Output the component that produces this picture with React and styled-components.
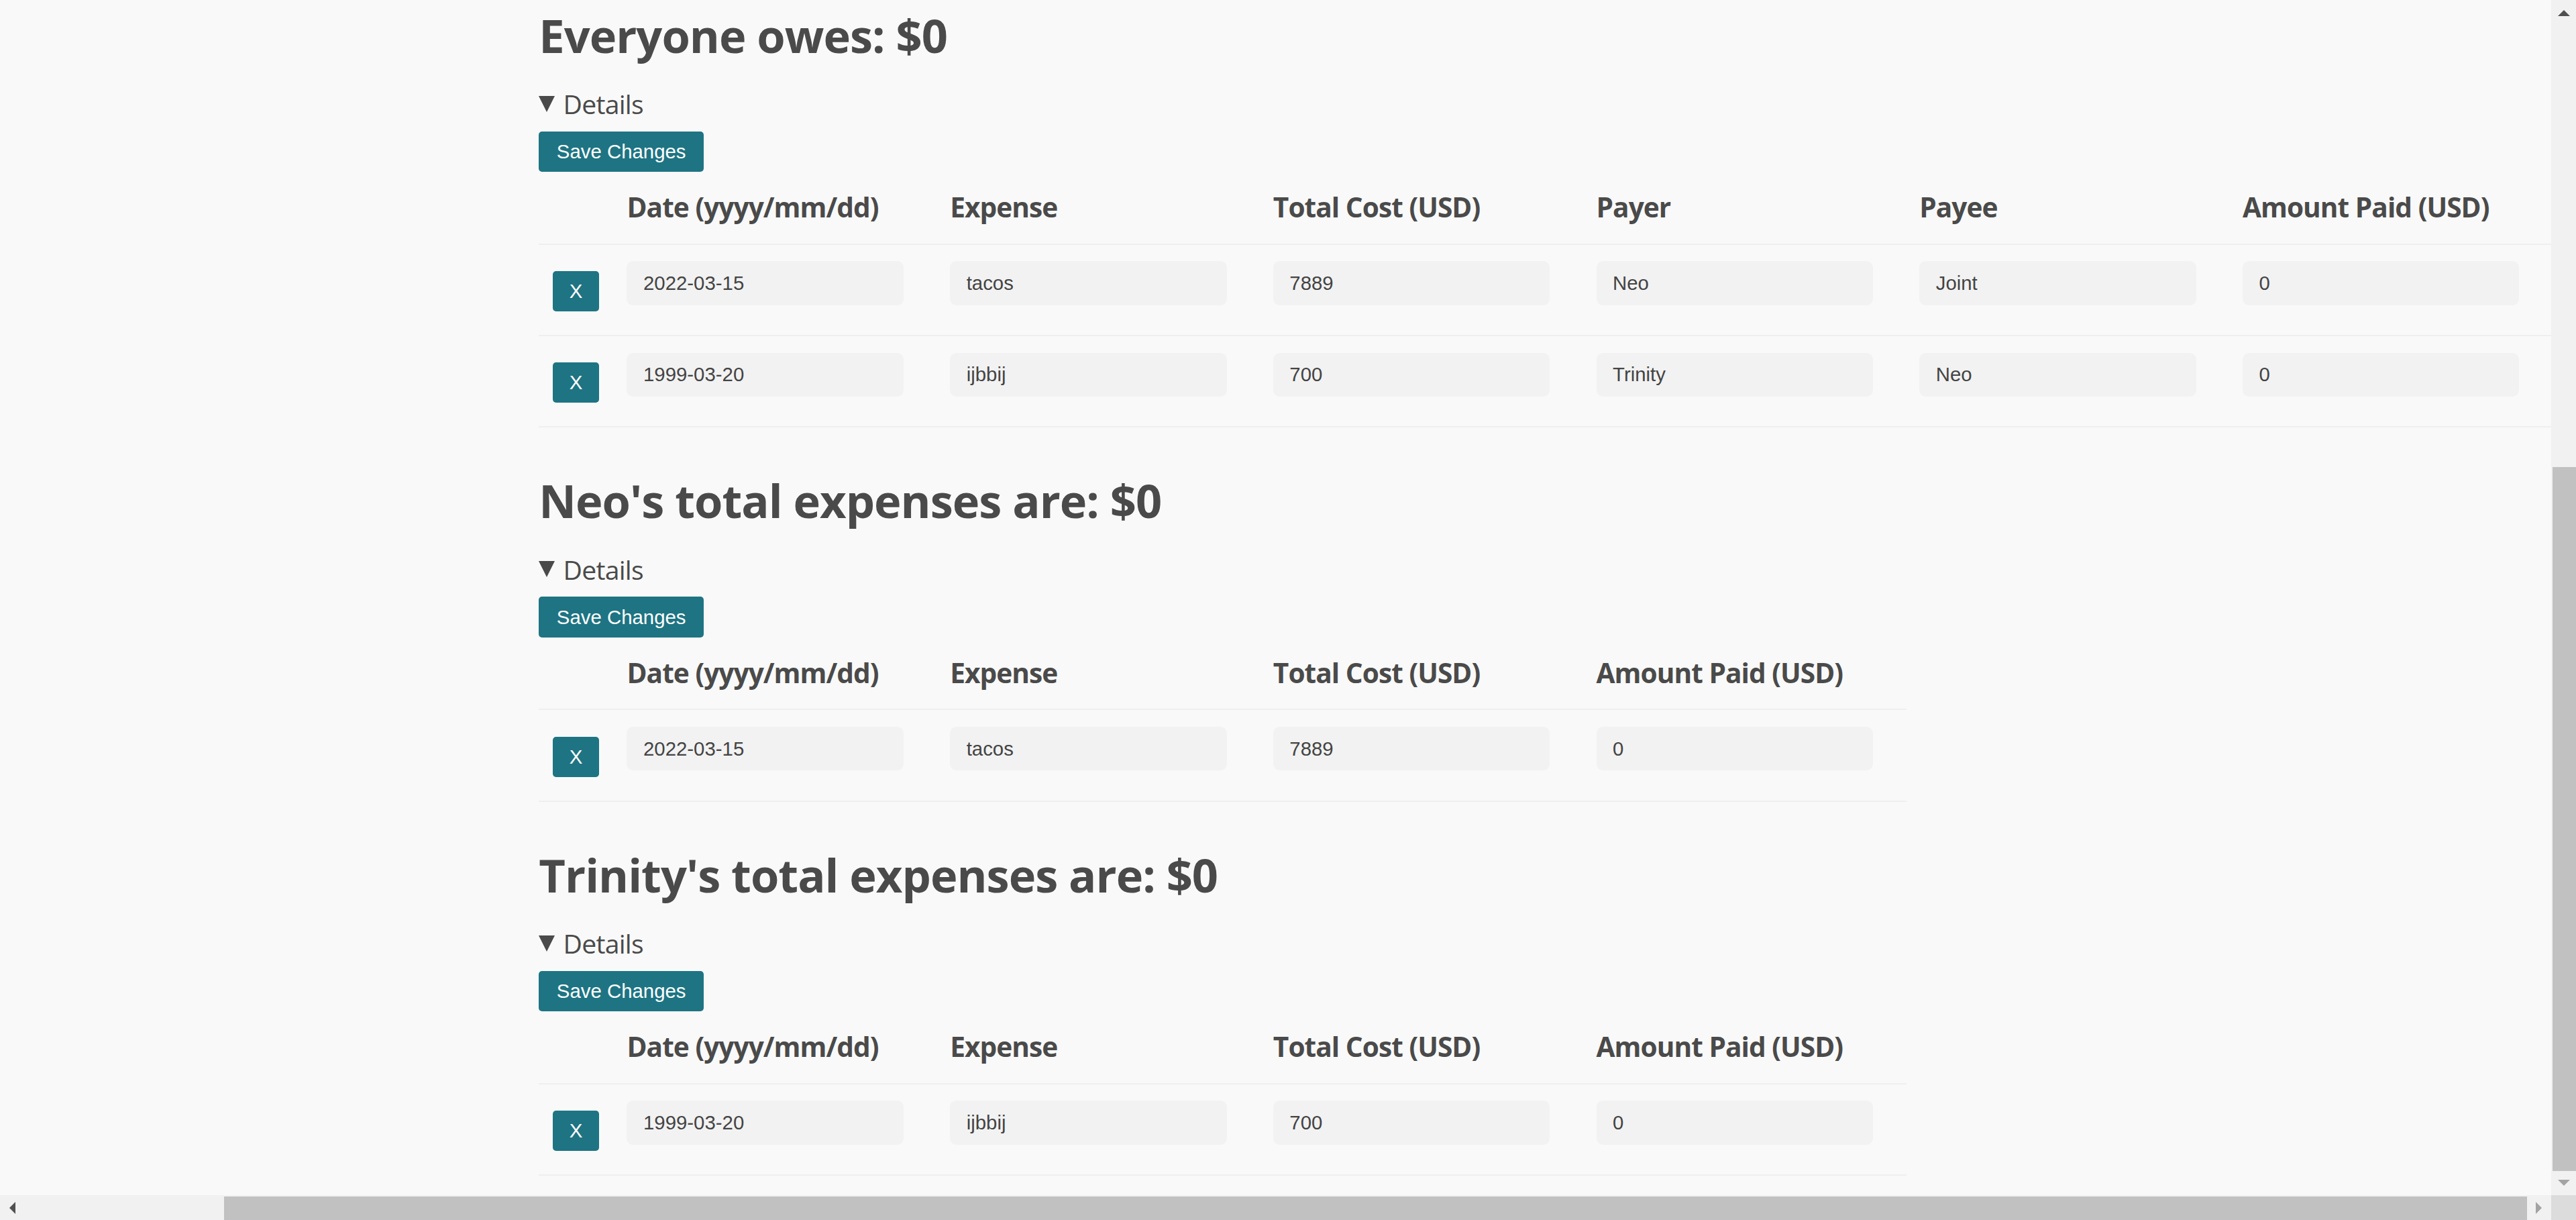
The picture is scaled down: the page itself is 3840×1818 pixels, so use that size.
import styled, { createGlobalStyle } from 'styled-components';

// the reference was taken at ~2.45x, so lay out in its css px and zoom up
const SCALE = 3840 / 1568;
const teal = '#1e7483';

const GlobalStyle = createGlobalStyle`
  html, body {
    margin: 0;
    padding: 0;
    overflow: hidden;
    background: #f9f9f9;
  }
`;

const Frame = styled.div`
  zoom: ${SCALE};
  width: 1568px;
  height: ${1818 / SCALE}px;
  display: grid;
  grid-template-columns: 1fr 15px;
  grid-template-rows: 1fr 15px;
  background: #f9f9f9;
  color: #4a4a4a;
  font-family: "Open Sans", "Noto Sans", sans-serif;
`;

const Viewport = styled.div`
  min-width: 0;
  min-height: 0;
  overflow: hidden;
  padding: 2.15px 0 0 328px;
  box-sizing: border-box;
`;

const Heading = styled.h2`
  margin: 1.4px 0 0;
  font-size: 28px;
  line-height: 36px;
  font-weight: 700;
  letter-spacing: -0.4px;
  white-space: nowrap;
`;

const Details = styled.details`
  margin-top: 13.6px;
`;

const Summary = styled.summary`
  display: flex;
  align-items: center;
  gap: 5px;
  font-size: 16px;
  line-height: 20px;
  letter-spacing: -0.3px;
  list-style: none;
  cursor: pointer;
  &::-webkit-details-marker { display: none; }
  &::before {
    content: "";
    width: 0;
    height: 0;
    border-left: 5px solid transparent;
    border-right: 5px solid transparent;
    border-top: 9.8px solid #4a4a4a;
  }
`;

const Button = styled.button`
  display: block;
  height: ${p => (p.$small ? '24.5px' : '24.7px')};
  width: ${p => (p.$small ? '28.1px' : '100.4px')};
  margin: ${p => (p.$small ? '2px 0 0' : '6.8px 0 0')};
  padding: 0;
  border: none;
  border-radius: 2px;
  background: ${teal};
  color: #fff;
  font-family: "Liberation Sans", Arial, sans-serif;
  font-size: 12px;
  text-align: center;
`;

const Table = styled.table`
  border-collapse: collapse;
  border-spacing: 0;
  margin-bottom: 26.6px;
`;

const Th = styled.th`
  text-align: left;
  font-size: 16.6px;
  line-height: 22px;
  font-weight: 700;
  letter-spacing: -0.4px;
  white-space: nowrap;
  padding: 10.5px 20.3px 11px 8px;
  border-bottom: 1px solid #efefef;
  &:first-child { padding: 10.5px 9px 11px 8.5px; }
`;

const Td = styled.td`
  padding: 10.1px 20.3px 10.1px 8px;
  vertical-align: middle;
  border-bottom: 1px solid #efefef;
  &:first-child { padding: 10.1px 9px 10.1px 8.5px; }
`;

const Input = styled.input`
  display: block;
  box-sizing: border-box;
  width: 168.4px;
  height: 26.6px;
  margin: 0 0 8px;
  padding: 0 10px;
  border: none;
  border-radius: 4px;
  background: #f2f2f2;
  color: #444;
  font-family: "Liberation Sans", Arial, sans-serif;
  font-size: 12px;
  outline: none;
`;

const VBar = styled.div`
  display: flex;
  flex-direction: column;
  background: #f1f1f1;
`;

const HBar = styled.div`
  display: flex;
  background: #f1f1f1;
`;

const ArrowCell = styled.div`
  flex: 0 0 15px;
  width: 15px;
  height: 15px;
  display: flex;
  align-items: center;
  justify-content: center;
`;

const Arrow = styled.span`
  width: 0;
  height: 0;
  ${p => p.$dir === 'up' && `
    border-left: 3.7px solid transparent;
    border-right: 3.7px solid transparent;
    border-bottom: 3.7px solid ${p.$off ? '#a3a3a3' : '#505050'};
    margin-top: 1px;
  `}
  ${p => p.$dir === 'down' && `
    border-left: 3.7px solid transparent;
    border-right: 3.7px solid transparent;
    border-top: 3.7px solid ${p.$off ? '#a3a3a3' : '#505050'};
  `}
  ${p => p.$dir === 'left' && `
    border-top: 3.7px solid transparent;
    border-bottom: 3.7px solid transparent;
    border-right: 3.7px solid ${p.$off ? '#a3a3a3' : '#505050'};
  `}
  ${p => p.$dir === 'right' && `
    border-top: 3.7px solid transparent;
    border-bottom: 3.7px solid transparent;
    border-left: 3.7px solid ${p.$off ? '#a3a3a3' : '#505050'};
  `}
`;

const VTrack = styled.div`
  flex: 1;
  display: flex;
  flex-direction: column;
  padding-top: 269.2px;
`;

const HTrack = styled.div`
  flex: 1;
  display: flex;
  padding-left: 121.4px;
`;

const Thumb = styled.div`
  flex: 1;
  background: #c1c1c1;
  margin: ${p => (p.$horizontal ? '0.7px 0 0' : '0 0 0 0.9px')};
`;

const Corner = styled.div`
  background: #dcdcdc;
`;

const expenses = [
  { date: '2022-03-15', name: 'tacos', cost: '7889', payer: 'Neo', payee: 'Joint', paid: '0' },
  { date: '1999-03-20', name: 'ijbbij', cost: '700', payer: 'Trinity', payee: 'Neo', paid: '0' },
];

const Section = ({ title, rows, full }) => (
  <>
    <Heading>{title}</Heading>
    <Details open>
      <Summary>Details</Summary>
      <Button>Save Changes</Button>
      <Table>
        <thead>
          <tr>
            <Th />
            <Th>Date (yyyy/mm/dd)</Th>
            <Th>Expense</Th>
            <Th>Total Cost (USD)</Th>
            {full && <Th>Payer</Th>}
            {full && <Th>Payee</Th>}
            <Th>Amount Paid (USD)</Th>
          </tr>
        </thead>
        <tbody>
          {rows.map(r => (
            <tr key={r.date}>
              <Td><Button $small>X</Button></Td>
              <Td><Input defaultValue={r.date} /></Td>
              <Td><Input defaultValue={r.name} /></Td>
              <Td><Input defaultValue={r.cost} /></Td>
              {full && <Td><Input defaultValue={r.payer} /></Td>}
              {full && <Td><Input defaultValue={r.payee} /></Td>}
              <Td><Input defaultValue={r.paid} /></Td>
            </tr>
          ))}
        </tbody>
      </Table>
    </Details>
  </>
);

export default function App() {
  return (
    <>
      <GlobalStyle />
      <Frame>
        <Viewport>
          <Section title="Everyone owes: $0" rows={expenses} full />
          <Section title="Neo's total expenses are: $0" rows={[expenses[0]]} />
          <Section title="Trinity's total expenses are: $0" rows={[expenses[1]]} />
        </Viewport>
        <VBar>
          <ArrowCell><Arrow $dir="up" /></ArrowCell>
          <VTrack><Thumb /></VTrack>
          <ArrowCell><Arrow $dir="down" $off /></ArrowCell>
        </VBar>
        <HBar>
          <ArrowCell><Arrow $dir="left" /></ArrowCell>
          <HTrack><Thumb $horizontal /></HTrack>
          <ArrowCell><Arrow $dir="right" $off /></ArrowCell>
        </HBar>
        <Corner />
      </Frame>
    </>
  );
}
